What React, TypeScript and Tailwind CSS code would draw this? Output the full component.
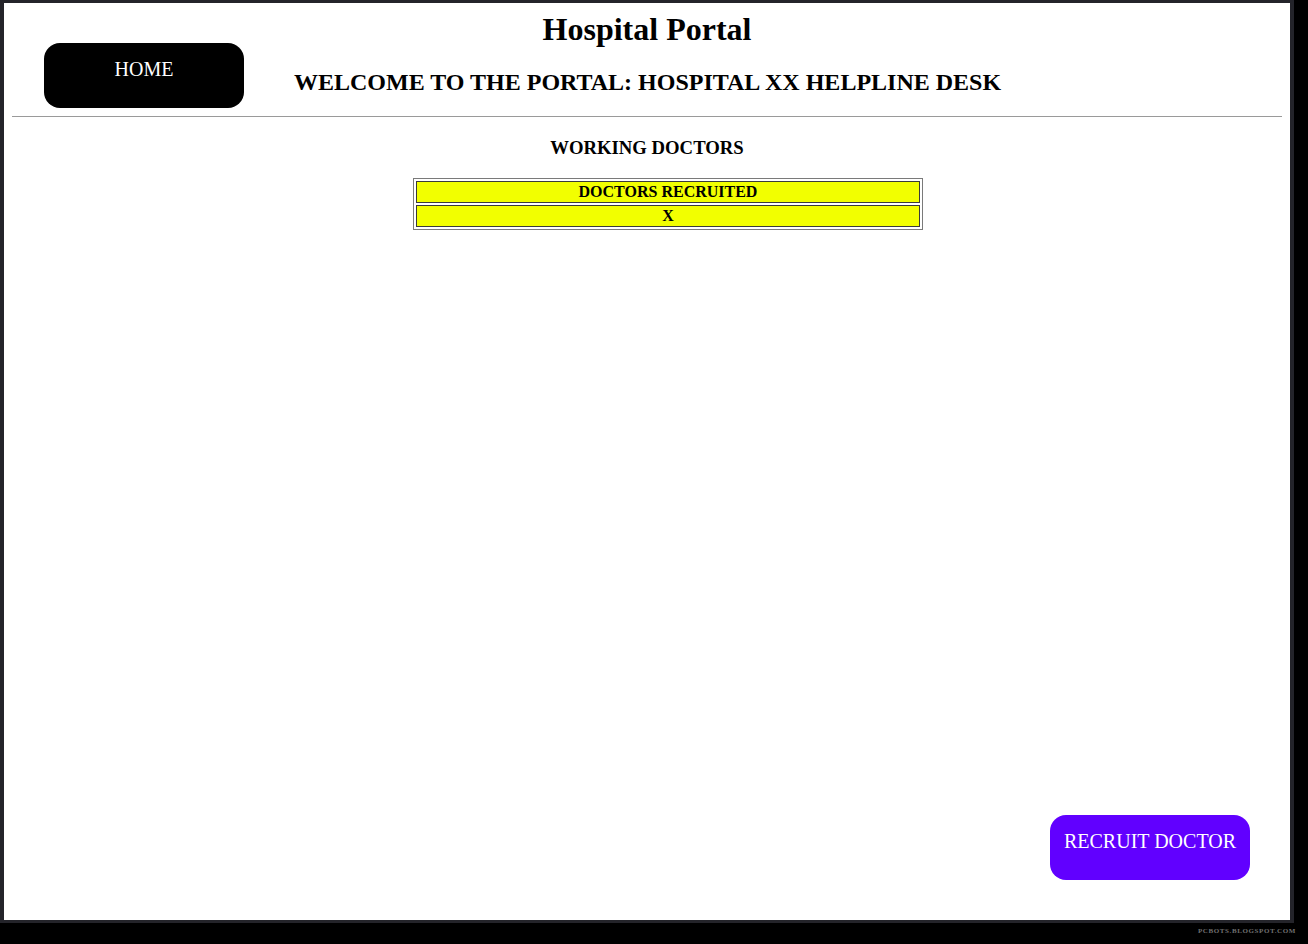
export default function App() {
  return (
    <div className="w-[1308px] h-[944px] bg-black flex flex-col font-['Liberation_Serif',serif] text-black">
      {/* page frame */}
      <div className="w-[1294px] h-[923px] bg-white border-t-[3px] border-b-[3px] border-l-[4px] border-r-[4px] border-[#24242a] px-[8px] pt-[8px] pb-[8px] flex flex-col">
        <h1 className="h-[32px] text-[32px] leading-[36px] font-bold text-center">Hospital Portal</h1>

        <div className="flex items-start pl-[32px]">
          <button className="w-[200px] h-[65px] rounded-[16px] bg-black text-white text-[20px] leading-[23px] pt-[15px] flex justify-center items-start">
            HOME
          </button>
          <h2 className="ml-[50px] mt-[27px] text-[24px] leading-[24px] font-bold">
            WELCOME TO THE PORTAL: HOSPITAL XX HELPLINE DESK
          </h2>
        </div>

        <hr className="mt-[8px] border-0 border-t border-[#9a9a9a]" />

        <h3 className="mt-[21px] text-[18.72px] leading-[20px] font-bold text-center">WORKING DOCTORS</h3>

        <table className="mt-[20px] ml-[401px] w-[510px] border-separate border-spacing-[2px] border border-[#7a7a7a]">
          <tbody>
            <tr>
              <th className="h-[22px] bg-[#f2ff00] border border-[#3a3a3a] p-0 text-[16px] leading-[18px] font-bold text-center">
                DOCTORS RECRUITED
              </th>
            </tr>
            <tr>
              <th className="h-[22px] bg-[#f2ff00] border border-[#3a3a3a] p-0 text-[16px] leading-[18px] font-bold text-center">
                X
              </th>
            </tr>
          </tbody>
        </table>

        <div className="mt-auto self-end mr-[32px] mb-[32px]">
          <button className="w-[200px] h-[65px] rounded-[16px] bg-[#6100ff] text-white text-[20px] leading-[23px] pt-[15px] flex justify-center items-start">
            RECRUIT DOCTOR
          </button>
        </div>
      </div>

      <div className="flex justify-end pr-[12px] mt-[4px]">
        <span className="text-[7px] leading-[8px] font-bold tracking-[0.6px] text-[#6f6f6f]">PCBOTS.BLOGSPOT.COM</span>
      </div>
    </div>
  );
}
